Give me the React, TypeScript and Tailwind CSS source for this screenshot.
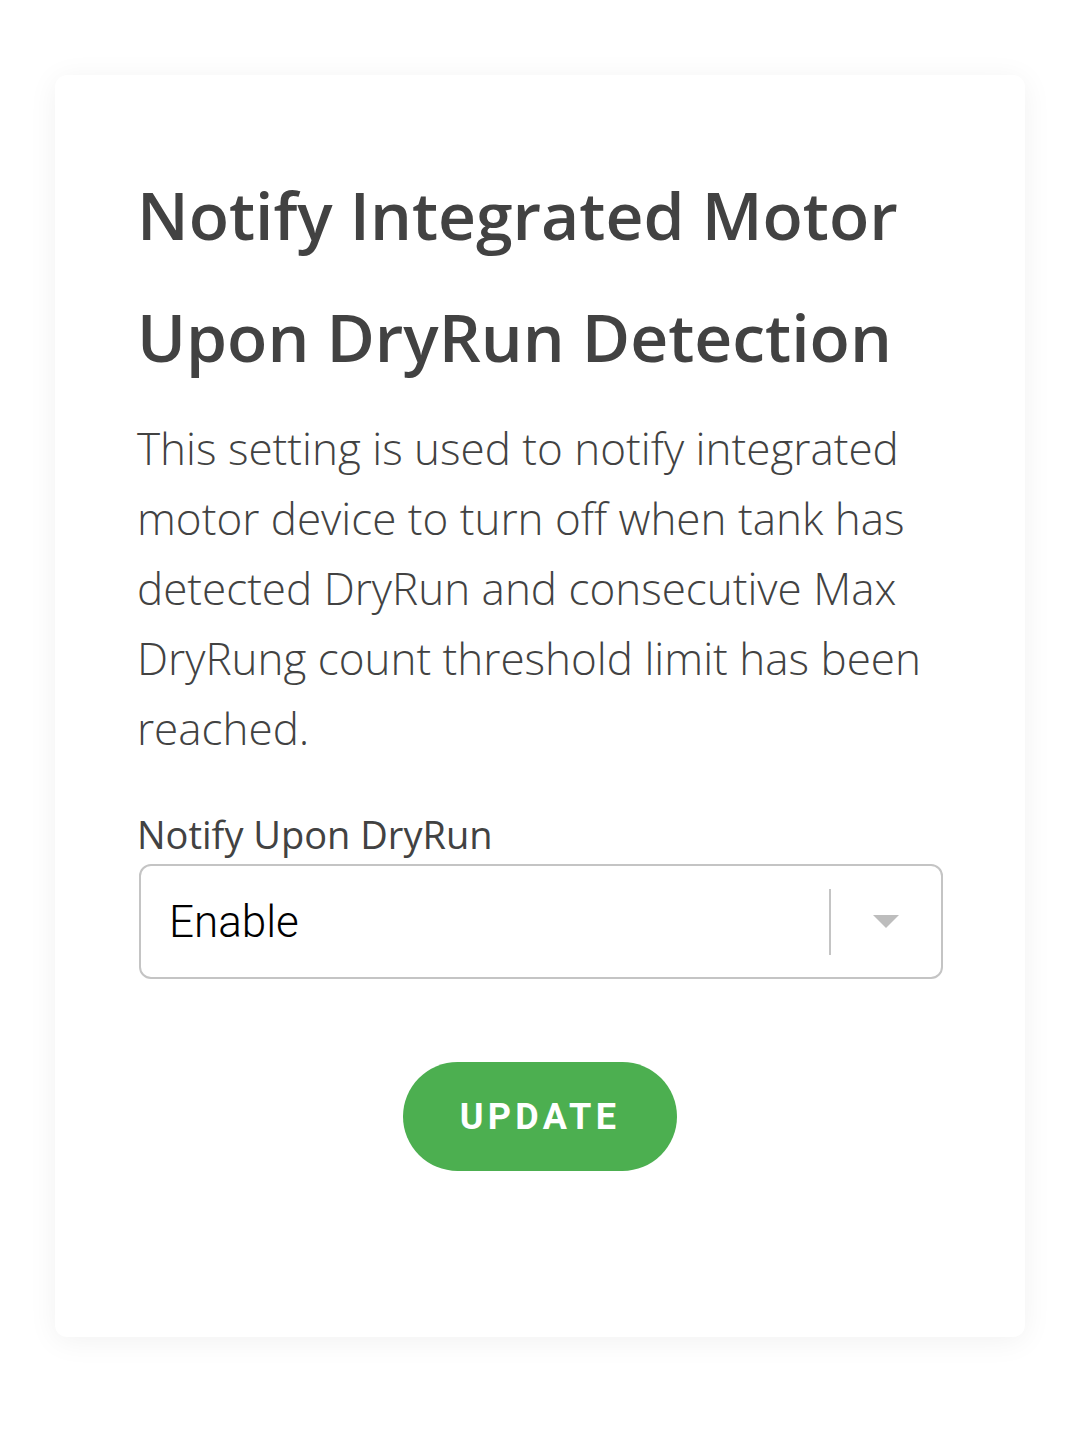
import { useState } from 'react';

const App = () => {
  const [value] = useState('Enable');

  return (
    <div className="min-h-screen bg-white pt-[75px] px-[55px]">
      <div className="bg-white rounded-xl shadow-[0_4px_30px_rgba(0,0,0,0.06)] h-[1262px] pl-[82px] pr-[82px] pt-[158px]">
        <h1
          className="text-[66px] leading-[122px] font-semibold text-[#424242] -mt-[80px]"
          style={{ fontFamily: '"Open Sans", sans-serif' }}
        >
          Notify Integrated Motor Upon DryRun Detection
        </h1>
        <p
          className="text-[44px] leading-[70px] font-light text-[#424242] mt-[16px]"
          style={{ fontFamily: '"Open Sans", sans-serif' }}
        >
          This setting is used to notify integrated motor device to turn off when tank has detected DryRun and consecutive Max DryRung count threshold limit has been reached.
        </p>

        {/* Select */}
        <div className="mt-[46px]">
          <label
            className="block text-[38px] leading-[50px] text-[#424242]"
            style={{ fontFamily: '"Open Sans", sans-serif' }}
          >
            Notify Upon DryRun
          </label>
          <div className="mt-[5px] ml-[2px] h-[115px] border-2 border-[#c4c4c4] rounded-xl flex items-center">
            <div
              className="flex-1 pl-[28px] text-[44px] font-light text-black"
              style={{ fontFamily: 'Roboto, sans-serif' }}
            >
              {value}
            </div>
            <div className="w-[2px] h-[66px] bg-[#c4c4c4]" />
            <div className="w-[110px] flex justify-center">
              <svg width="26" height="13" viewBox="0 0 26 13">
                <path d="M0 0 L26 0 L13 13 Z" fill="#bdbdbd" />
              </svg>
            </div>
          </div>
        </div>

        <div className="flex justify-center mt-[83px]">
          <button
            className="w-[274px] h-[109px] rounded-full bg-[#4caf50] text-white text-[36px] font-bold tracking-[0.12em]"
            style={{ fontFamily: 'Roboto, sans-serif' }}
          >
            UPDATE
          </button>
        </div>
      </div>
    </div>
  );
};

export default App;
